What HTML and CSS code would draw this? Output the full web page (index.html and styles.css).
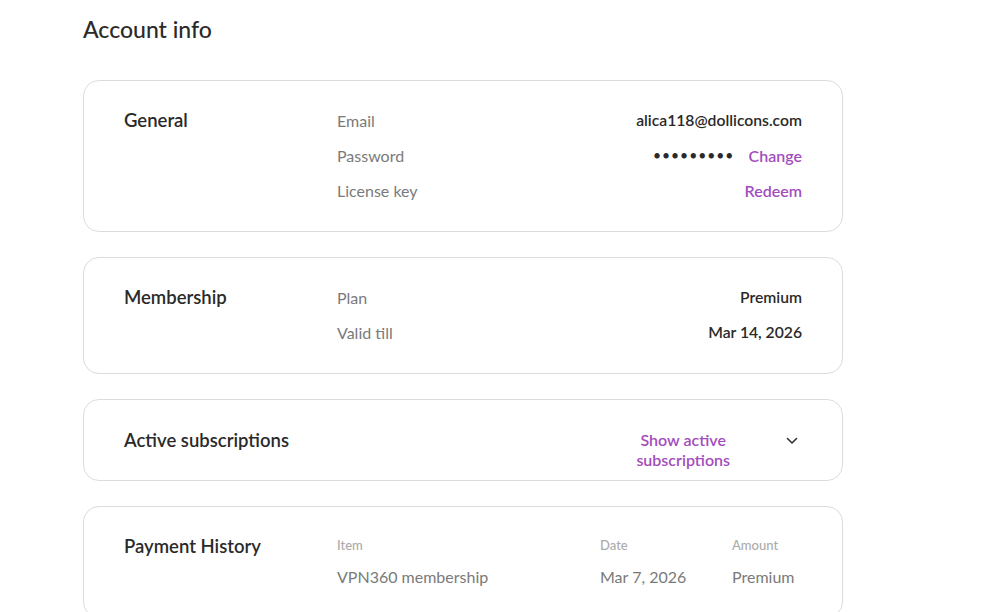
FILE: index.html
```html
<!DOCTYPE html>
<html lang="en">
<head>
<meta charset="utf-8">
<link rel="stylesheet" href="styles.css">
</head>
<body>
<main class="page">
  <h1 class="title">Account info</h1>

  <section class="card">
    <h2 class="card-title">General</h2>
    <div class="rows">
      <div class="row"><span class="label">Email</span><span class="value">alica118@dollicons.com</span></div>
      <div class="row"><span class="label">Password</span><span class="value"><span class="dots">•••••••••</span><a class="link" href="#">Change</a></span></div>
      <div class="row"><span class="label">License key</span><span class="value"><a class="link" href="#">Redeem</a></span></div>
    </div>
  </section>

  <section class="card">
    <h2 class="card-title">Membership</h2>
    <div class="rows">
      <div class="row"><span class="label">Plan</span><span class="value">Premium</span></div>
      <div class="row"><span class="label">Valid till</span><span class="value">Mar 14, 2026</span></div>
    </div>
  </section>

  <section class="card card-subs">
    <h2 class="card-title">Active subscriptions</h2>
    <div class="subs-action">
      <a class="link show" href="#">Show active<br>subscriptions</a>
      <svg class="chev" width="12" height="8" viewBox="0 0 12 8" aria-hidden="true"><path d="M1.5 1.5 L6 6 L10.5 1.5" fill="none" stroke="#333" stroke-width="1.6" stroke-linecap="round" stroke-linejoin="round"/></svg>
    </div>
  </section>

  <section class="card">
    <h2 class="card-title">Payment History</h2>
    <div class="table">
      <div class="th">Item</div><div class="th">Date</div><div class="th">Amount</div>
      <div class="td">VPN360 membership</div><div class="td">Mar 7, 2026</div><div class="td">Premium</div>
    </div>
  </section>
</main>
</body>
</html>
```
FILE: styles.css
```css
* { box-sizing: border-box; }
html, body { margin: 0; padding: 0; background: #fff; }
body {
  font-family: "Lato", "Noto Sans", sans-serif;
  color: #222;
}
.page {
  width: 760px;
  margin-left: 83px;
  padding-top: 14px;
  display: flex;
  flex-direction: column;
  gap: 25px;
}
.title {
  margin: 0 0 11px;
  font-size: 23px;
  font-weight: 500;
  line-height: 30px;
  color: #2a2a2a;
}
.card {
  border: 1px solid #dcdcdc;
  border-radius: 16px;
  padding: 27px 40px 29px 40px;
  display: grid;
  grid-template-columns: 213px 1fr;
  align-items: start;
}
.card-title {
  margin: 0;
  font-size: 18.5px;
  font-weight: 600;
  line-height: 24px;
  color: #2a2a2a;
}
.rows {
  display: flex;
  flex-direction: column;
  gap: 11px;
}
.row {
  display: flex;
  justify-content: space-between;
  align-items: center;
  height: 24px;
}
.label {
  font-size: 16px;
  color: #7a7a7a;
}
.value {
  font-size: 15.7px;
  font-weight: 600;
  color: #2a2a2a;
  display: flex;
  align-items: center;
  gap: 14px;
}
.dots {
  font-size: 13px;
  letter-spacing: 1.5px;
  color: #2a2a2a;
}
.link {
  color: #a34dbd;
  font-weight: 600;
  text-decoration: none;
  font-size: 16px;
}
.card-subs {
  padding-top: 28px;
  padding-bottom: 10px;
}
.subs-action {
  display: flex;
  justify-content: flex-end;
  align-items: flex-start;
  gap: 56px;
}
.show {
  text-align: center;
  line-height: 20px;
  margin-top: 2px;
}
.chev { margin-top: 9px; margin-right: 4px; }
.table {
  display: grid;
  grid-template-columns: 263px 132px 1fr;
  row-gap: 12px;
  padding-top: 2px;
}
.th {
  font-size: 13px;
  color: #ababab;
  font-weight: 500;
  line-height: 18px;
}
.td {
  font-size: 16px;
  color: #7a7a7a;
  line-height: 22px;
}
```
